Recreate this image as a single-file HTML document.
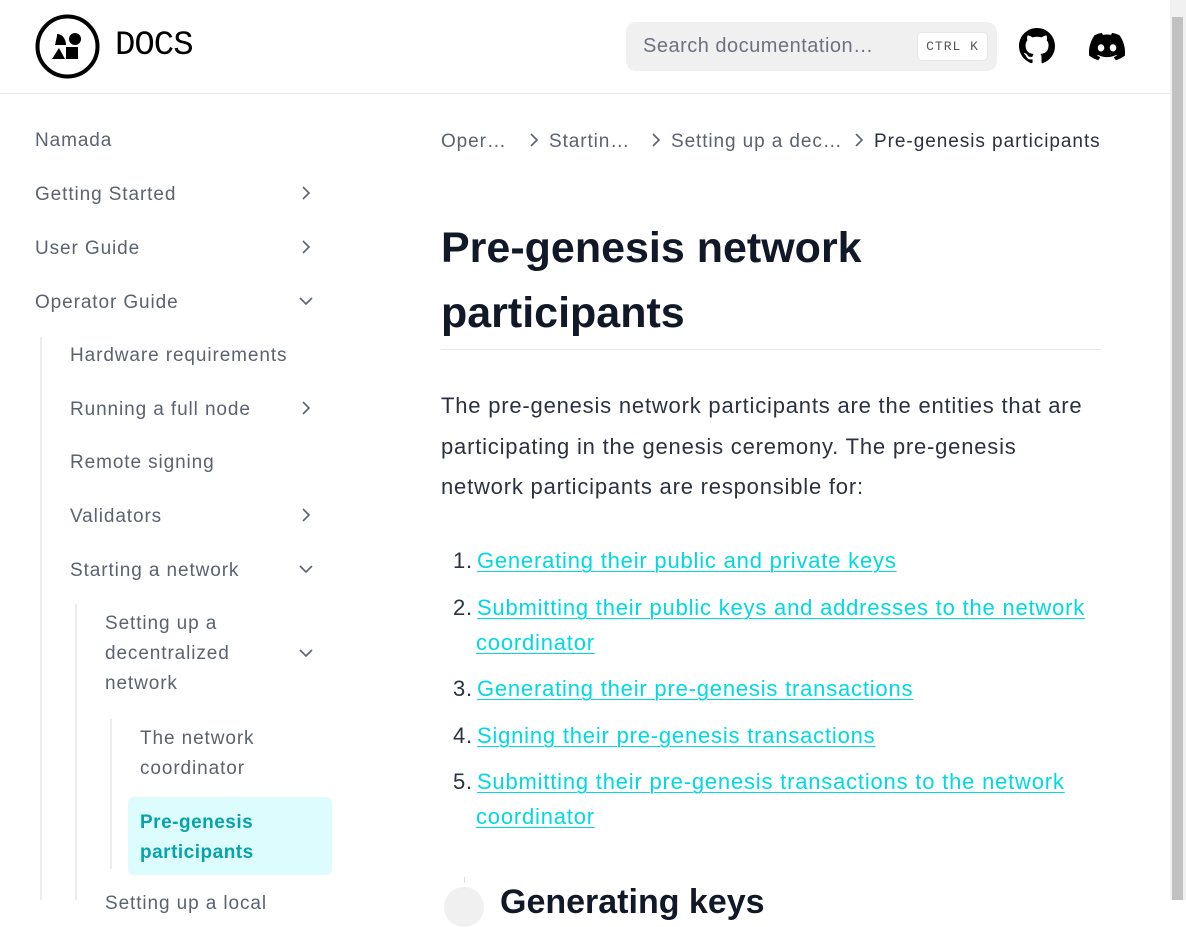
<!DOCTYPE html>
<html><head><meta charset="utf-8">
<style>
*{margin:0;padding:0;box-sizing:border-box}
body{width:1186px;height:900px;overflow:hidden;background:#fff;font-family:"Liberation Sans",sans-serif;position:relative;color:#111827}
.a{position:absolute;white-space:nowrap}
.nav{font-size:19px;color:#5b6270;line-height:30px;letter-spacing:0.9px}
.p{font-size:22px;color:#2b3140;line-height:40.6px;letter-spacing:0.8px}
.li{font-size:22px;line-height:35px;color:#2b3140;letter-spacing:0.8px}
.li a{color:#00d9e0;text-decoration:underline;text-underline-offset:3px;text-decoration-thickness:1px}
</style></head><body>
<svg class="a" style="left:35px;top:14px" width="65" height="65" viewBox="0 0 65 65"><circle cx="32.5" cy="32.5" r="30" fill="none" stroke="#000" stroke-width="4"/>
<path d="M22 20 C28 20 31 26 31 31 L22 31Z" fill="#000"/><circle cx="40" cy="25" r="6" fill="#000"/><path d="M17 45 L24 34 L30 45Z" fill="#000"/><rect x="31" y="33" width="12" height="12" fill="#000"/><path d="M22 22 L20 31 L27 31" fill="#000"/></svg>
<div class="a" style="left:115px;top:27px;font-family:'Liberation Mono',monospace;font-size:34px;color:#000;letter-spacing:-1px">DOCS</div>
<div class="a" style="left:626px;top:22px;width:371px;height:49px;background:#f0f0f0;border-radius:10px"></div>
<div class="a" style="left:643px;top:35px;font-size:20px;color:#6b7280;letter-spacing:0.5px">Search documentation…</div>
<div class="a" style="left:917px;top:32px;width:71px;height:29px;background:#fff;border:1px solid #e5e7eb;border-radius:5px;font-family:'Liberation Mono',monospace;font-size:13px;color:#555;text-align:center;line-height:27px;letter-spacing:1px">CTRL K</div>
<svg class="a" style="left:1019px;top:28px" width="36" height="36" viewBox="0 0 16 16"><path fill="#000" d="M8 0C3.58 0 0 3.58 0 8c0 3.540 2.29 6.53 5.47 7.59.4.07.55-.17.55-.38v-1.330c-2.23.48-2.69-1.070-2.690-1.070-.36-.92-.89-1.170-.89-1.170-.73-.5.06-.49.06-.49.8.06 1.23.83 1.23.83.71 1.23 1.88.87 2.33.66.07-.52.28-.87.51-1.07-1.78-.2-3.64-.89-3.64-3.95 0-.87.31-1.59.82-2.15-.08-.2-.36-1.02.08-2.12 0 0 .67-.21 2.2.82a7.5 7.5 0 014 0c1.53-1.04 2.2-.82 2.2-.82.44 1.1.16 1.92.08 2.12.51.56.82 1.27.82 2.15 0 3.07-1.87 3.75-3.65 3.95.29.25.54.73.54 1.48v2.2c0 .21.15.46.55.38A8.01 8.01 0 0016 8c0-4.42-3.58-8-8-8z"/></svg>
<svg class="a" style="left:1089px;top:32px" width="36" height="29" viewBox="0 0 127 96"><path fill="#000" d="M107.7 8.1A105 105 0 0081.5 0a72 72 0 00-3.4 6.8 97.7 97.7 0 00-29.1 0A72 72 0 0045.6 0 105.9 105.9 0 0019.4 8.1C2.8 32.7-1.7 56.6.5 80.2a105.7 105.7 0 0032.2 16.2 77.7 77.7 0 006.9-11.1 68.4 68.4 0 01-10.8-5.2c.9-.7 1.8-1.4 2.7-2.1a75.6 75.6 0 0064.3 0c.9.7 1.8 1.5 2.7 2.1a68.7 68.7 0 01-10.9 5.2 77 77 0 006.9 11.1 105.3 105.3 0 0032.2-16.2c2.6-27.4-4.6-51.1-19-72.1zM42.5 65.7c-6.3 0-11.4-5.7-11.4-12.8s5-12.8 11.4-12.8 11.5 5.8 11.4 12.8-5 12.8-11.4 12.8zm42.2 0c-6.3 0-11.4-5.7-11.4-12.8s5-12.8 11.4-12.8 11.5 5.8 11.4 12.8-5 12.8-11.4 12.8z"/></svg>
<div class="a" style="left:0;top:93px;width:1170px;height:1px;background:#e5e7eb"></div>
<div class="a" style="left:1170px;top:0;width:16px;height:900px;background:#f1f1f1"></div>
<div class="a" style="left:1172px;top:17px;width:11px;height:883px;background:#c1c1c1"></div>
<div class="a nav" style="left:35px;top:126px">Namada</div>
<div class="a nav" style="left:35px;top:180px">Getting Started</div>
<div class="a nav" style="left:35px;top:234px">User Guide</div>
<div class="a nav" style="left:35px;top:288px">Operator Guide</div>
<div class="a" style="left:40px;top:337px;width:2px;height:563px;background:#ececec"></div>
<div class="a nav" style="left:70px;top:341px">Hardware requirements</div>
<div class="a nav" style="left:70px;top:395px">Running a full node</div>
<div class="a nav" style="left:70px;top:448px">Remote signing</div>
<div class="a nav" style="left:70px;top:502px">Validators</div>
<div class="a nav" style="left:70px;top:556px">Starting a network</div>
<div class="a" style="left:75px;top:604px;width:2px;height:296px;background:#ececec"></div>
<div class="a nav" style="left:105px;top:609px">Setting up a<br>decentralized<br>network</div>
<div class="a" style="left:110px;top:719px;width:2px;height:150px;background:#ececec"></div>
<div class="a nav" style="left:140px;top:724px">The network<br>coordinator</div>
<div class="a" style="left:128px;top:797px;width:204px;height:78px;background:#dcfcfd;border-radius:6px"></div>
<div class="a nav" style="left:140px;top:808px;color:#06a3a8;font-weight:bold;letter-spacing:0.5px">Pre-genesis<br>participants</div>
<div class="a nav" style="left:105px;top:889px">Setting up a local</div>
<svg class="a" style="left:299px;top:186px" width="14" height="14" viewBox="0 0 14 14"><path d="M4 1l6 6-6 6" fill="none" stroke="#5b6270" stroke-width="1.6"/></svg>
<svg class="a" style="left:299px;top:240px" width="14" height="14" viewBox="0 0 14 14"><path d="M4 1l6 6-6 6" fill="none" stroke="#5b6270" stroke-width="1.6"/></svg>
<svg class="a" style="left:299px;top:294px" width="14" height="14" viewBox="0 0 14 14"><path d="M1 4l6 6 6-6" fill="none" stroke="#5b6270" stroke-width="1.6"/></svg>
<svg class="a" style="left:299px;top:401px" width="14" height="14" viewBox="0 0 14 14"><path d="M4 1l6 6-6 6" fill="none" stroke="#5b6270" stroke-width="1.6"/></svg>
<svg class="a" style="left:299px;top:508px" width="14" height="14" viewBox="0 0 14 14"><path d="M4 1l6 6-6 6" fill="none" stroke="#5b6270" stroke-width="1.6"/></svg>
<svg class="a" style="left:299px;top:562px" width="14" height="14" viewBox="0 0 14 14"><path d="M1 4l6 6 6-6" fill="none" stroke="#5b6270" stroke-width="1.6"/></svg>
<svg class="a" style="left:299px;top:646px" width="14" height="14" viewBox="0 0 14 14"><path d="M1 4l6 6 6-6" fill="none" stroke="#5b6270" stroke-width="1.6"/></svg>
<div class="a nav" style="left:441px;top:127px">Oper…</div>
<div class="a nav" style="left:549px;top:127px">Startin…</div>
<div class="a nav" style="left:671px;top:127px">Setting up a dec…</div>
<div class="a nav" style="left:874px;top:127px;color:#2b3140;letter-spacing:0.95px">Pre-genesis participants</div>
<svg class="a" style="left:527px;top:133px" width="14" height="14" viewBox="0 0 14 14"><path d="M4 1l6 6-6 6" fill="none" stroke="#5b6270" stroke-width="1.6"/></svg>
<svg class="a" style="left:649px;top:133px" width="14" height="14" viewBox="0 0 14 14"><path d="M4 1l6 6-6 6" fill="none" stroke="#5b6270" stroke-width="1.6"/></svg>
<svg class="a" style="left:852px;top:133px" width="14" height="14" viewBox="0 0 14 14"><path d="M4 1l6 6-6 6" fill="none" stroke="#5b6270" stroke-width="1.6"/></svg>
<div class="a" style="left:441px;top:216px;font-size:43px;font-weight:bold;line-height:65px;color:#111827">Pre-genesis network<br>participants</div>
<div class="a" style="left:441px;top:349px;width:660px;height:1px;background:#e5e7eb"></div>
<div class="a p" style="left:441px;top:386px">The pre-genesis network participants are the entities that are<br>participating in the genesis ceremony. The pre-genesis<br>network participants are responsible for:</div>
<div class="a li" style="left:453px;top:543px">1.<a style="margin-left:4px">Generating their public and private keys</a></div>
<div class="a li" style="left:453px;top:590px">2.<a style="margin-left:4px">Submitting their public keys and addresses to the network</a></div>
<div class="a li" style="left:476px;top:625px"><a>coordinator</a></div>
<div class="a li" style="left:453px;top:671px">3.<a style="margin-left:4px">Generating their pre-genesis transactions</a></div>
<div class="a li" style="left:453px;top:718px">4.<a style="margin-left:4px">Signing their pre-genesis transactions</a></div>
<div class="a li" style="left:453px;top:764px">5.<a style="margin-left:4px">Submitting their pre-genesis transactions to the network</a></div>
<div class="a li" style="left:476px;top:799px"><a>coordinator</a></div>
<div class="a" style="left:464px;top:877px;width:1px;height:6px;background:#ddd"></div>
<div class="a" style="left:444px;top:887px;width:40px;height:40px;border-radius:50%;background:#f0f0f0"></div>
<div class="a" style="left:500px;top:883px;font-size:34px;font-weight:bold;color:#111827">Generating keys</div>
</body></html>
